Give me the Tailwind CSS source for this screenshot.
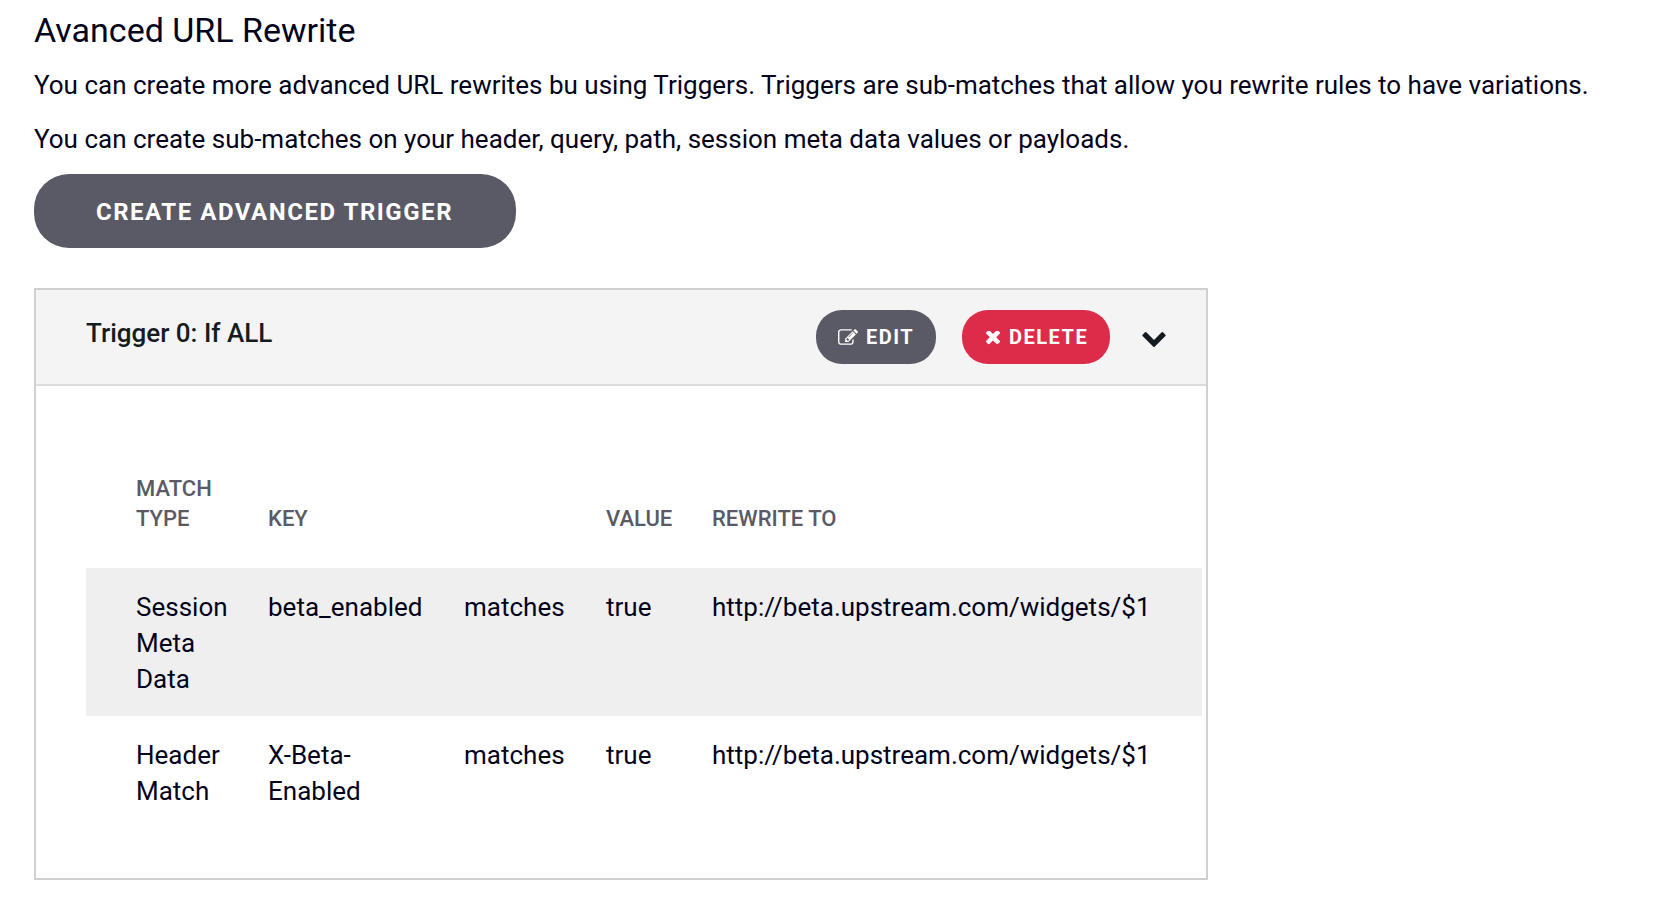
<!DOCTYPE html>
<html lang="en">
<head>
<meta charset="utf-8">
<title>Advanced URL Rewrite</title>
<script src="https://cdn.jsdelivr.net/npm/@tailwindcss/browser@4"></script>
</head>
<body class="bg-white pl-[34px] pt-2 font-[Roboto,sans-serif] text-[26px] leading-9 text-[#03031c]">
<h1 class="text-[34px] leading-[44px]">Avanced URL Rewrite</h1>
<p class="mt-[15px]">You can create more advanced URL rewrites bu using Triggers. Triggers are sub-matches that allow you rewrite rules to have variations.</p>
<p class="mt-[18px]">You can create sub-matches on your header, query, path, session meta data values or payloads.</p>
<button class="mt-[17px] flex h-[74px] w-[482px] items-center justify-center rounded-[35px] bg-[#5a5a66] pr-px pt-px text-2xl font-bold tracking-[1.53px] text-white">CREATE ADVANCED TRIGGER</button>

<section class="mt-10 h-[592px] w-[1174px] border-2 border-[#d0d0d0]">
  <header class="flex h-24 items-center border-b-2 border-[#dcdcdc] bg-[#f4f4f4] pl-[50px] text-[#151c20]">
    <h2 class="-mt-2 mr-auto font-medium">Trigger 0: If ALL</h2>
    <button class="mr-[26px] flex h-[54px] w-[120px] items-center rounded-[26px] bg-[#5a5a66] pl-[22px] text-xl font-bold tracking-[1.5px] text-white">
      <svg class="mr-2 h-4 w-5" viewBox="0 128 1792 1408" fill="currentColor"><path d="M888 1184l116-116-152-152-116 116v56h96v96h56zm440-720q-16-16-33 1l-350 350q-17 17-1 33t33-1l350-350q17-17 1-33zm80 594v190q0 119-84.5 203.5t-203.5 84.5h-832q-119 0-203.5-84.5t-84.5-203.5v-832q0-119 84.5-203.5t203.5-84.5h832q63 0 117 25 15 7 18 23 3 17-9 29l-49 49q-14 14-32 8-23-6-45-6h-832q-66 0-113 47t-47 113v832q0 66 47 113t113 47h832q66 0 113-47t47-113v-126q0-13 9-22l64-64q15-15 35-7t20 29zm-96-738l288 288-672 672h-288v-288zm444 132l-92 92-288-288 92-92q28-28 68-28t68 28l152 152q28 28 28 68t-28 68z"/></svg>EDIT
    </button>
    <button class="mr-8 flex h-[54px] w-[148px] items-center rounded-[26px] bg-[#dd2c4a] pl-6 text-xl font-bold tracking-[1.5px] text-white">
      <svg class="mr-[9px] mt-0.5 size-3.5" viewBox="302 434 1188 1188" fill="currentColor"><path transform="translate(0 68)" d="M1490 1254q0 40-28 68l-136 136q-28 28-68 28t-68-28l-294-294-294 294q-28 28-68 28t-68-28l-136-136q-28-28-28-68t28-68l294-294-294-294q-28-28-28-68t28-68l136-136q28-28 68-28t68 28l294 294 294-294q28-28 68-28t68 28l136 136q28 28 28 68t-28 68l-294 294 294 294q28 28 28 68z"/></svg>DELETE
    </button>
    <svg class="mr-10 mt-[5px] h-[15px] w-6" viewBox="90 533 1612 1035" fill="currentColor"><path d="M1683 808l-742 741q-19 19-45 19t-45-19l-742-741q-19-19-19-45.5t19-45.5l166-165q19-19 45-19t45 19l531 531 531-531q19-19 45-19t45 19l166 165q19 19 19 45.5t-19 45.5z"/></svg>
  </header>

  <table class="ml-[50px] mt-[68px] w-[1116px] table-fixed border-collapse text-left">
    <colgroup><col class="w-[162px]"><col class="w-[196px]"><col class="w-[142px]"><col class="w-[106px]"><col class="w-[510px]"></colgroup>
    <thead class="align-bottom text-[22px] leading-[30px] text-[#5a5a66]">
      <tr>
        <th class="pb-[34px] pl-[50px] pt-5 font-medium">MATCH TYPE</th>
        <th class="pb-[34px] pl-5 font-medium">KEY</th>
        <th></th>
        <th class="pb-[34px] pl-5 font-medium">VALUE</th>
        <th class="pb-[34px] pl-5 font-medium">REWRITE TO</th>
      </tr>
    </thead>
    <tbody class="align-top">
      <tr class="bg-[#efefef]">
        <td class="pb-[19px] pl-[50px] pt-[21px]">Session Meta Data</td>
        <td class="pb-[19px] pl-5 pt-[21px]">beta_enabled</td>
        <td class="pb-[19px] pl-5 pt-[21px]">matches</td>
        <td class="pb-[19px] pl-5 pt-[21px]">true</td>
        <td class="pb-[19px] pl-5 pt-[21px]">http://beta.upstream.com/widgets/$1</td>
      </tr>
      <tr>
        <td class="pb-[19px] pl-[50px] pt-[21px]">Header Match</td>
        <td class="pb-[19px] pl-5 pr-10 pt-[21px]">X-Beta-Enabled</td>
        <td class="pb-[19px] pl-5 pt-[21px]">matches</td>
        <td class="pb-[19px] pl-5 pt-[21px]">true</td>
        <td class="pb-[19px] pl-5 pt-[21px]">http://beta.upstream.com/widgets/$1</td>
      </tr>
    </tbody>
  </table>
</section>
</body>
</html>
